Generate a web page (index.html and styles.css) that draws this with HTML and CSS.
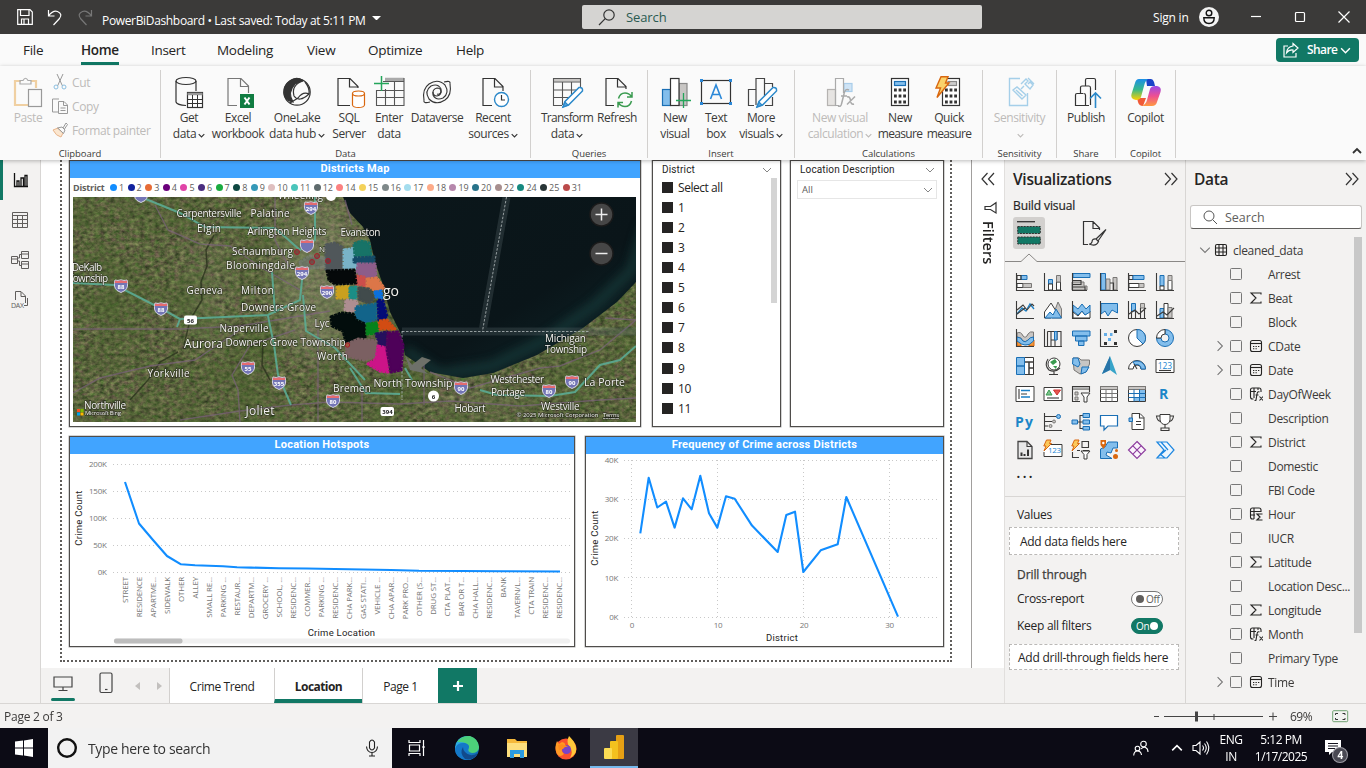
FILE: index.html
```html
<!DOCTYPE html>
<html lang="en">
<head>
<meta charset="utf-8">
<title>PowerBiDashboard</title>
<link rel="stylesheet" href="styles.css">
</head>
<body>
<svg class="defs" width="0" height="0">
  <defs>
    <symbol id="chev" viewBox="0 0 10 10"><path d="M1 3L5 7L9 3"/></symbol>
    <symbol id="sigma" viewBox="0 0 14 14"><path d="M12 3.500V2H2L7 7L2 12H12V10.500"/></symbol>
    <symbol id="cal" viewBox="0 0 14 14"><rect x="1.500" y="1.500" width="11" height="11" rx="2"/><path d="M1.500 4.500H12.500"/><path d="M4 7.500H10.500M4 9.800H8" stroke-dasharray="1.300 1.200"/></symbol>
    <symbol id="fx" viewBox="0 0 14 14"><path d="M4.500 12H3.500Q1.500 12 1.500 10V3Q1.500 1 3.500 1H10Q12 1 12 3V5M1.500 4.500H7M5 1V11M9 1V3"/><path d="M10.500 5Q8.500 4 8 7L7 13Q6.500 14.500 5 14M6.500 8H9.500M10.500 9.500L14 13.500M14 9.500L10.500 13.500"/></symbol>
    <symbol id="sumcol" viewBox="0 0 14 14"><path d="M5 12H3.500Q1.500 12 1.500 10V3Q1.500 1 3.500 1H10Q12 1 12 3V5M1.500 4.500H12M1.500 8H6M5 1V12"/><path d="M13.500 7H8L11 10L8 13H13.500" stroke-width="1.200"/></symbol>
    <symbol id="shield" viewBox="0 0 14 14"><path d="M1 1Q4 2 7 .8Q10 2 13 1Q15 8 11 11.500L7 13.500L3 11.500Q-1 8 1 1Z" fill="#7375b5" stroke="#e4e3ef" stroke-width=".9"/><path d="M1.300 1.500Q4 2.400 7 1.200Q10 2.400 12.700 1.500L13.300 4H.7Z" fill="#e56b70"/></symbol>
  </defs>
</svg>
<div class="app">
  <header class="titlebar">
    <div class="quick">
      <svg width="16" height="16" viewBox="0 0 16 16"><path d="M.7 .7H13L15.300 3V15.300H.7ZM3.500 1V6.500H12V1M4.500 15V10H11.500V15M7 10V15"/></svg>
      <svg width="16" height="18" viewBox="0 0 16 18"><path d="M1.500 2V8H7.500M1.500 8Q6 2 10.500 3.500Q16 6 12.500 10.500L6.500 17"/></svg>
      <svg class="off" width="16" height="18" viewBox="0 0 16 18"><path d="M14.500 2V8H8.500M14.500 8Q10 2 5.500 3.500Q0 6 3.500 10.500L9.500 17"/></svg>
    </div>
    <div class="doc">PowerBiDashboard • Last saved: Today at 5:11 PM</div><i class="doc-caret"></i>
    <div class="top-search"><svg width="18" height="18" viewBox="0 0 18 18"><circle cx="11" cy="7" r="5.200"/><path d="M7.200 10.700L1 17"/></svg><span>Search</span></div>
    <div class="sign">Sign in</div>
    <svg class="avatar" width="20" height="20" viewBox="0 0 20 20"><circle cx="10" cy="10" r="10" fill="#f3f3f3" stroke="none"/><circle cx="10" cy="6" r="2.800" fill="none" stroke="#111" stroke-width="1.400"/><path d="M4.800 10.800H15.200Q15.200 16.500 10 16.500Q4.800 16.500 4.800 10.800Z" fill="none" stroke="#111" stroke-width="1.400"/></svg>
    <div class="win"><svg width="12" height="12" viewBox="0 0 12 12"><path d="M1 5.500H11"/></svg><svg width="12" height="12" viewBox="0 0 12 12"><rect x="1.500" y="1.500" width="9" height="9" rx="1"/></svg><svg width="12" height="12" viewBox="0 0 12 12"><path d="M.5 .5L11.500 11.500M11.500 .5L.5 11.500"/></svg></div>
  </header>

  <nav class="menu">
    <span class="m1">File</span><span class="m2"><b>Home</b></span><span class="m3">Insert</span><span class="m4">Modeling</span><span class="m5">View</span><span class="m6">Optimize</span><span class="m7">Help</span>
    <div class="share"><svg width="16" height="16" viewBox="0 0 16 16"><path d="M5 4H1V15H13V11M10 1.500L15 6L10 10.500V8Q6 7.500 3.500 11Q4 4.800 10 4Z"/></svg><span>Share</span><svg class="c" width="11" height="11"><use href="#chev"/></svg></div>
  </nav>

  <section class="ribbon">
    <div class="group g-clip">
      <div class="tools">
        <div class="btn off b-paste"><svg width="32" height="32" viewBox="0 0 32 32"><path d="M9 5H3V29H16" stroke="#f0d0a2" stroke-width="2.200"/><path d="M19 5H24V12" stroke="#f0d0a2" stroke-width="2.200"/><path d="M8 8V4.500H11Q13.500 0 16 4.500H19V8Z" stroke="#aaa"/><rect x="16.500" y="13.500" width="13" height="17" fill="#fafafa" stroke="#999"/></svg><span>Paste</span></div>
        <div class="stack">
          <div><svg width="16" height="16" viewBox="0 0 16 16"><path d="M5 0L10.500 12M11 0L5.500 12" stroke="#999"/><circle cx="4" cy="13" r="2" stroke="#8cbfe0"/><circle cx="12" cy="13" r="2" stroke="#8cbfe0"/></svg>Cut</div>
          <div><svg width="16" height="16" viewBox="0 0 16 16"><path d="M6 14H.5V1H7M6.500 3.500H12L15.500 7V15.500H6.500ZM11.500 4V7.500H15M8.500 10H13.500M8.500 12.500H13.500" stroke="#999"/></svg>Copy</div>
          <div><svg width="16" height="16" viewBox="0 0 16 16"><path d="M1 8L6 6L11 11L9 15Q4 14 1 8Z" stroke="#e8b48a" fill="#fbe6cf"/><path d="M5.500 6L11.500 11.500L13 8L10 5ZM11 6L14 1L15.500 2.500L12.500 7" stroke="#999"/></svg>Format painter</div>
        </div>
      </div>
      <div class="glabel">Clipboard</div>
    </div>
    <div class="group g-data">
      <div class="tools">
        <div class="btn" style="width:56px"><svg width="32" height="32" viewBox="0 0 32 32"><ellipse cx="13" cy="5" rx="10" ry="3.500"/><path d="M3 5V26Q4 29 13 29.500M23 5V15"/><rect x="14.500" y="16.500" width="15" height="15" fill="#fff"/><path d="M14.500 18H29.500" stroke-width="2.500" stroke="#999"/><path d="M14.500 23.500H29.500M14.500 27.500H29.500M19.500 19V31M24.500 19V31" stroke-width="1"/></svg><span>Get</span><span>data<svg class="c"><use href="#chev"/></svg></span></div>
        <div class="btn" style="width:42px"><svg width="32" height="32" viewBox="0 0 32 32"><path d="M15 29.500H6V2.500H19L26.500 10V17M18.500 3V10.500H26" stroke="#777"/><rect x="18" y="18" width="14" height="14" fill="#107c41" stroke="none"/><path d="M22.500 21.500L27.500 28.500M27.500 21.500L22.500 28.500" stroke="#fff" stroke-width="2"/></svg><span>Excel</span><span>workbook</span></div>
        <div class="btn" style="width:76px"><svg width="32" height="32" viewBox="0 0 32 32"><circle cx="16" cy="16" r="13.200"/><path d="M9 5Q15 0 22 4.500L14 8Q6 16 12 26Q4 25 3 17Q3 9 9 5Z" fill="#333"/><path d="M22 5Q10 9 13 20Q18 27 28 18Q22 15 17 22L9 27M24 6Q29 12 28 18"/></svg><span>OneLake</span><span>data hub<svg class="c"><use href="#chev"/></svg></span></div>
        <div class="btn" style="width:28px"><svg width="32" height="32" viewBox="0 0 32 32"><path d="M17 29.500H5V2.500H17L25 10.500V12M16.500 3V11H25"/><path d="M19.500 17.500V29Q20 31.500 25.500 31.500T31.500 29V17.500" stroke="#d9670f" fill="#fff"/><ellipse cx="25.500" cy="17.500" rx="6" ry="2.500" stroke="#d9670f" fill="#fff"/></svg><span>SQL</span><span>Server</span></div>
        <div class="btn" style="width:52px"><svg width="32" height="32" viewBox="0 0 32 32"><path d="M12 3.500H31" stroke="#aaa" stroke-width="3.500"/><path d="M3.500 14V29.500H31V2M10 5.500H31M3.500 14.500H31M3.500 21.500H31M12.500 13V29.500M21.500 6V29.500" stroke="#555" stroke-width="1.100"/><path d="M8.500 0V15M1 7.500H16" stroke="#23a55a" stroke-width="1.500"/></svg><span>Enter</span><span>data</span></div>
        <div class="btn" style="width:44px"><svg width="32" height="32" viewBox="0 0 32 32"><path d="M3 24Q1 13 8 8Q17 2 24 9Q29 17 22 22Q15 25 12 19Q11 13 16 12Q20 12 20 16Q19 19 16 18" stroke-width="1.100"/><path d="M29 8Q31 19 24 24Q15 30 8 23Q3 15 10 10Q17 7 20 13Q21 19 16 20Q12 20 12 16" stroke-width="1.100"/><path d="M3 24Q2 28 9 26M29 8Q30 4 23 6" stroke-width="1.100"/></svg><span>Dataverse</span></div>
        <div class="btn" style="width:68px"><svg width="32" height="32" viewBox="0 0 32 32"><path d="M15 29.500H6V2.500H18L26 10.500V15M17.500 3V11H26"/><circle cx="24.500" cy="23.500" r="7" stroke="#2b88c9" stroke-width="1.400" fill="#fff"/><path d="M24.500 19V24H28"/></svg><span>Recent</span><span>sources<svg class="c"><use href="#chev"/></svg></span></div>
      </div>
      <div class="glabel">Data</div>
    </div>
    <div class="group g-query">
      <div class="tools">
        <div class="btn" style="width:54px"><svg width="32" height="32" viewBox="0 0 32 32"><path d="M2 4H30" stroke="#c8c6c4" stroke-width="3"/><path d="M11 29.500H2.500V2.500H29.500V12M2.500 6H29.500M2.500 14H25M2.500 21.500H18M11.500 6V29M20.500 6V19" stroke="#555" stroke-width="1.100"/><path d="M12 31L14 25.500L28 11.500Q32 11 31.500 15L17.500 29Z" stroke="#2b88c9" fill="#fff" stroke-width="1.500"/><path d="M12 31L14 26L17 29Z" fill="#5aa7e0" stroke="#2b88c9"/></svg><span class="tight">Transform</span><span>data<svg class="c"><use href="#chev"/></svg></span></div>
        <div class="btn" style="width:46px"><svg width="32" height="32" viewBox="0 0 32 32"><path d="M13 29.500H5V2.500H17L25 10.500V13M16.500 3V11H25"/><path d="M17.500 22.500Q19 17 24 17Q28 17 30.500 20.500M31 16V21H26M30.500 25Q29 30.500 24 30.500Q20 30.500 17.500 27M17 31.500V26.500H22" stroke="#3a9b50" stroke-width="1.500"/></svg><span>Refresh</span></div>
      </div>
      <div class="glabel">Queries</div>
    </div>
    <div class="group g-insert">
      <div class="tools">
        <div class="btn" style="width:54px"><svg width="32" height="32" viewBox="0 0 32 32"><rect x="20" y="7.500" width="8" height="22" fill="#c8c6c4" stroke="#888"/><rect x="3.500" y="13.500" width="8" height="16" fill="#83beec" stroke="#1a6fb5"/><rect x="11.500" y="2.500" width="8.500" height="27" fill="#fff"/><path d="M24.500 17V32M17 24.500H32" stroke="#23a55a" stroke-width="1.300"/></svg><span>New</span><span>visual</span></div>
        <div class="btn" style="width:28px"><svg width="32" height="32" viewBox="0 0 32 32"><rect x="1.500" y="4.500" width="29" height="23"/><path d="M10.500 23L16 9L21.500 23M12.500 18.500H19.500" stroke="#2b88d8" stroke-width="1.600"/><path d="M0 3H3V6H0ZM29 3H32V6H29ZM0 26H3V29H0ZM29 26H32V29H29Z" fill="#2b88d8" stroke="none"/></svg><span>Text</span><span>box</span></div>
        <div class="btn" style="width:62px"><svg width="32" height="32" viewBox="0 0 32 32"><path d="M9 29.500H3.500V13.500H11.500M11 29V2.500H19.500V20M20 7.500H27.500V11M20 29.500H27.500V21" stroke="#444"/><path d="M12 31L14 25.500L28 11.500Q32 11 31.500 15L17.500 29Z" stroke="#2b88c9" fill="#fff" stroke-width="1.500"/><path d="M12 31L14 26L17 29Z" fill="#5aa7e0" stroke="#2b88c9"/></svg><span>More</span><span>visuals<svg class="c"><use href="#chev"/></svg></span></div>
      </div>
      <div class="glabel">Insert</div>
    </div>
    <div class="group g-calc">
      <div class="tools">
        <div class="btn off" style="width:80px"><svg width="32" height="32" viewBox="0 0 32 32"><rect x="3.500" y="13.500" width="8" height="16" fill="#e6e4e2" stroke="#b5b3b1"/><rect x="20" y="7.500" width="8" height="8" fill="#cfe4f6" stroke="#a9cdea"/><path d="M15 29.500H11.500V2.500H19.500V17" stroke="#aaa"/><path d="M25 14Q21 12 20 18L17.500 28Q17 31 14 30M17 20H23M23 21Q26 20 26.500 24.500Q27 29 30 28M31 20.500L23 28.500" stroke="#aaa" stroke-width="1.500"/></svg><span>New visual</span><span>calculation<svg class="c"><use href="#chev"/></svg></span></div>
        <div class="btn" style="width:40px"><svg width="32" height="32" viewBox="0 0 32 32"><rect x="7.500" y="2.500" width="17" height="27" fill="#fff"/><rect x="10.500" y="5.500" width="11" height="4" fill="#83beec" stroke="#1a6fb5"/><path d="M10 14H22M10 20H22M10 26H22" stroke-width="2.800" stroke-dasharray="2.800 1.800"/></svg><span>New</span><span class="tight">measure</span></div>
        <div class="btn" style="width:58px"><svg width="32" height="32" viewBox="0 0 32 32"><rect x="9.500" y="2.500" width="17" height="27" fill="#fff"/><rect x="15" y="5.500" width="8.500" height="4" fill="#ccc" stroke="#888"/><path d="M12 14H24M12 20H24M12 26H24" stroke-width="2.800" stroke-dasharray="2.800 1.800"/><path d="M8 .8H15L12.500 7H16L4 21.500L7.500 12H3Z" fill="#fbd36b" stroke="#d9670f" stroke-width="1.400"/></svg><span>Quick</span><span class="tight">measure</span></div>
      </div>
      <div class="glabel">Calculations</div>
    </div>
    <div class="group g-sens">
      <div class="tools"><div class="btn off" style="width:73px"><svg width="32" height="32" viewBox="0 0 32 32"><path d="M16 2.500H5.500V29.500H23.500V17" stroke="#a5cfe9" stroke-width="1.400"/><path d="M9 14L13 11L22 19L18 23ZM12 14L18.500 20M17 8L22 3L24 5L21 8L26 13L29 9L26 6L24 8M20 10L17 13M24 2L30 8" stroke="#a5cfe9" stroke-width="1.400"/></svg><span>Sensitivity</span><span><svg class="c"><use href="#chev"/></svg></span></div></div>
      <div class="glabel">Sensitivity</div>
    </div>
    <div class="group g-share">
      <div class="tools"><div class="btn" style="width:58px"><svg width="32" height="32" viewBox="0 0 32 32"><path d="M19 29.500H5.500V19Q5.500 17.500 7 17.500H13M10.500 17V11.500Q10.500 10 12 10H19M15.500 10V4Q15.500 2.500 17 2.500H24Q25.500 2.500 25.500 4V14M13.500 17.500Q15.500 17.500 15.500 19V29M19 10Q20.500 10 20.500 12V29"/><path d="M25.500 32V17M20 22.500L25.500 17L31 22.500" stroke="#2b88c9" stroke-width="1.600"/></svg><span>Publish</span></div></div>
      <div class="glabel">Share</div>
    </div>
    <div class="group g-copilot">
      <div class="tools"><div class="btn" style="width:59px"><svg width="32" height="32" viewBox="0 0 32 32"><defs><linearGradient id="cpa" x1="0" y1="0" x2="0" y2="1"><stop offset="0" stop-color="#1c8fe8"/><stop offset=".5" stop-color="#37b98a"/><stop offset="1" stop-color="#ffd000"/></linearGradient><linearGradient id="cpb" x1="0" y1="0" x2="0" y2="1"><stop offset="0" stop-color="#9a4be8"/><stop offset=".5" stop-color="#ee4f92"/><stop offset="1" stop-color="#ff9a40"/></linearGradient></defs><g stroke="none"><path d="M16 3H21Q23 3 24 6L25 10H17Z" fill="#1b44c8"/><path d="M7 22H16L13 30Q9 30 8 26Z" fill="#f05a38"/><path d="M9 3H18Q15 5 14 10L11 21Q10 24 6 24Q0 23 1.500 18L5 7Q6 3 9 3Z" fill="url(#cpa)"/><path d="M25 10H27Q32 11 30.500 16L27 26Q26 30 22 30H12Q16 28 17 24L20 13Q21 10 25 10Z" fill="url(#cpb)"/></g></svg><span>Copilot</span></div></div>
      <div class="glabel">Copilot</div>
    </div>
    <svg class="collapse" width="10" height="10"><use href="#chev"/></svg>
  </section>

  <main class="work">
    <aside class="rail">
      <div class="rail-i on"><svg width="16" height="16" viewBox="0 0 16 16"><path d="M1.500 1V14.500H15M4 14V9H6V14M8 14V6H10.500V14M12 14V3.500H14V14" stroke="#111" stroke-width="1.300"/></svg></div>
      <div class="rail-i"><svg width="16" height="16" viewBox="0 0 16 16"><path d="M.5 .5H15.500V15.500H.5ZM.5 3.500H15.500M.5 7.500H15.500M.5 11.500H15.500M5.500 3.500V15M10.500 3.500V15"/></svg></div>
      <div class="rail-i"><svg width="20" height="20" viewBox="0 0 20 20"><path d="M1.500 6.500H7.500V13.500H1.500ZM1.500 9H7.500M11.500 1.500H18.500V8.500H11.500ZM11.500 4H18.500M11.500 11.500H18.500V18.500H11.500ZM11.500 14H18.500M7.500 8H9.500V4.500H11.500M7.500 11H9.500V15.500H11.500"/></svg></div>
      <div class="rail-i"><svg width="20" height="20" viewBox="0 0 20 20"><path d="M5.500 10V1.500H11L15.500 6V13M11 2V6.500H15.500M17.500 8V15.500H14"/><text x="1" y="18" textLength="13" font-size="7">DAX</text></svg></div>
    </aside>
    <div class="center">
      <div class="upper">
        <div class="canvas">
          <div class="page">
            <div class="row r1">
              <div class="card c-map">
                <h3>Districts Map</h3>
                <div class="legend"><b>District</b>
                  <span><i style="background:#118dff"></i>1</span><span><i style="background:#12239e"></i>2</span><span><i style="background:#e66c37"></i>3</span><span><i style="background:#6b007b"></i>4</span><span><i style="background:#e044a7"></i>5</span><span><i style="background:#4b2e80"></i>6</span><span><i style="background:#1aab40"></i>7</span><span><i style="background:#0f4842"></i>8</span><span><i style="background:#3599b8"></i>9</span><span class="w"><i style="background:#dfbfbf"></i>10</span><span class="w"><i style="background:#4ac5bb"></i>11</span><span class="w"><i style="background:#5f6b6d"></i>12</span><span class="w"><i style="background:#fb8281"></i>14</span><span class="w"><i style="background:#f4d25a"></i>15</span><span class="w"><i style="background:#7f898a"></i>16</span><span class="w"><i style="background:#a4ddee"></i>17</span><span class="w"><i style="background:#fdab89"></i>18</span><span class="w"><i style="background:#b687ac"></i>19</span><span class="w"><i style="background:#28738a"></i>20</span><span class="w"><i style="background:#a78f8f"></i>22</span><span class="w"><i style="background:#168980"></i>24</span><span class="w"><i style="background:#293537"></i>25</span><span class="w"><i style="background:#bb4a4a"></i>31</span>
                </div>
                <svg class="map" width="563" height="225" viewBox="73 197 563 225">
                  <defs>
                    <filter id="land" x="0" y="0" width="1" height="1" color-interpolation-filters="sRGB"><feTurbulence type="fractalNoise" baseFrequency=".2 .26" numOctaves="4" seed="11"/><feColorMatrix values=".42 .18 0 0 .06  .24 .36 0 0 .09  .3 .1 0 0 .045  0 0 0 0 1"/></filter>
                    <filter id="patch" x="0" y="0" width="1" height="1" color-interpolation-filters="sRGB"><feTurbulence type="fractalNoise" baseFrequency=".022" numOctaves="4" seed="3"/><feColorMatrix values="0 0 0 0 .27  0 0 0 0 .38  0 0 0 0 .16  1.600 0 0 0 -.55"/></filter>
                    <filter id="soft" x="-1" y="-1" width="3" height="3"><feGaussianBlur stdDeviation="14"/></filter>
                    <filter id="edge"><feGaussianBlur stdDeviation="5"/></filter>
                    <linearGradient id="lake" x1="0" y1="0" x2="1" y2="1"><stop offset="0" stop-color="#0b171b"/><stop offset=".6" stop-color="#0a1519"/><stop offset="1" stop-color="#0f282c"/></linearGradient>
                    <path id="shore" d="M343 197L350 213L363 227L370 240L375 262L382 282L390 312L400 332L405 355L430 372L463 378L493 373L537 355L583 328L617 302L636 282V197Z"/>
                    <clipPath id="lakeclip"><use href="#shore"/></clipPath>
                  </defs>
                  <rect x="73" y="197" width="563" height="225" filter="url(#land)"/>
                  <rect x="73" y="197" width="563" height="225" filter="url(#patch)" opacity=".65"/>
                  <g filter="url(#soft)"><ellipse cx="318" cy="280" rx="45" ry="80" fill="#a5a18c" opacity=".3"/><ellipse cx="480" cy="398" rx="60" ry="10" fill="#958f78" opacity=".25"/><ellipse cx="210" cy="290" rx="25" ry="60" fill="#a5a18c" opacity=".12"/></g>
                  <path d="M214 235L206 250L207 266L201 282L202 300L190 320L184 345M178 352L160 362L148 380L130 400M263 345L262 365L270 380" stroke="#2a331d" stroke-width="1.500" fill="none" opacity=".8"/>
                  <use href="#shore" fill="url(#lake)"/>
                  <g clip-path="url(#lakeclip)"><path d="M645 225L632 270L595 305L545 340L492 366L440 374L405 350" stroke="#1c4442" stroke-width="11" fill="none" opacity=".55" filter="url(#edge)"/></g>
                  <g fill="none" stroke="#7b637a" stroke-width="1.400" opacity=".7"><path d="M155 205L168 230L200 244L230 246L262 268L300 290M73 329L180 329L240 326L300 316L330 311M73 393L100 378L150 366L195 360L240 330M275 197V240L288 265L300 273M240 422L238 390L232 375L250 345L295 330M180 420L240 411L290 405L330 402L400 404L450 401L520 406L600 400L636 398M318 330V422M345 200L352 225M430 372L470 388L540 368L560 366L600 350L636 320L605 318M362 390V422M424 365V405"/></g>
                  <g fill="none" stroke="#5bab93" stroke-width="2" opacity=".9"><path d="M141 197L180 213L205 227L275 228L300 250L315 240V197M73 283L115 285L160 308L180 319L268 315L300 300L303 270M180 319L177 327M275 313L272 272M268 316L274 345L278 375L291 405M303 295L306 331L335 348L365 380M350 368L366 393L400 394M405 368L412 380M480 390L497 395L550 396L575 392L600 365L620 360L636 346"/></g>
                  <path d="M506.500 197L482.500 331M402 331.500H636" stroke="#58666a" stroke-width="8" opacity=".3" fill="none"/>
                  <path d="M506.500 197L482.500 331M402 331.500H590M402 331V400" stroke="#b3babc" stroke-width="1" stroke-dasharray="2.500 1.500" fill="none" opacity=".8"/>
                  <path d="M405 355L412 365L422 357L431 360L421 368L428 374L410 370Z" fill="#6e7069"/>
                  <g stroke-linejoin="round" stroke-width="3" stroke-dasharray="3 .6">
                    <path d="M326 245L334 243L342 247V271H326Z" fill="#50575a" stroke="#50575a"/><path d="M300 262L310 256L324 258V267L302 269Z" fill="#6c7270" stroke="#7c8280" opacity=".6"/>
                    <path d="M344 250L356 248L358 268L344 269Z" fill="#79b3c8" stroke="#79b3c8"/>
                    <path d="M354 244L361 241L369 243L371 256H355Z" fill="#177367" stroke="#177367"/><path d="M354 258L374 257L374 263L354 262Z" fill="#154b68" stroke="#154b68"/>
                    <path d="M358 264L375 264L376 277L364 278L357 272Z" fill="#8d5d8a" stroke="#8d5d8a"/>
                    <path d="M356 276L364 277L366 286L355 284Z" fill="#cc4e4b" stroke="#cc4e4b"/><path d="M367 279L377 278L384 288L377 291L367 287Z" fill="#dc7648" stroke="#dc7648"/>
                    <path d="M337 287L348 286V298H337Z" fill="#c9a01f" stroke="#c9a01f"/><path d="M350 288L356 287V299L350 298Z" fill="#1b8e86" stroke="#1b8e86"/>
                    <path d="M359 288L369 289L374 298L369 303L359 299Z" fill="#414b4c" stroke="#414b4c"/><path d="M375 292L381 291L382 298L376 297Z" fill="#0b70df" stroke="#0b70df"/>
                    <path d="M346 300L356 301L359 308L352 312L345 310Z" fill="#ae8e91" stroke="#ae8e91"/><path d="M356 307L376 304V319L366 323L356 318Z" fill="#12648a" stroke="#12648a"/>
                    <path d="M378 300L383 301L387 317L379 320Z" fill="#040c77" stroke="#040c77"/>
                    <path d="M331 317L341 313L353 314L356 320L365 324V342L346 342L343 331L332 326Z" fill="#020d0c" stroke="#020d0c"/>
                    <path d="M367 324L378 323L377 333L367 334Z" fill="#05831c" stroke="#05831c"/><path d="M379 321L387 320L395 329L380 329Z" fill="#d24c13" stroke="#d24c13"/>
                    <path d="M376 334L387 332L386 346L379 345Z" fill="#25105d" stroke="#25105d"/>
                    <path d="M347 344L358 339L376 341V357L364 360L346 356Z" fill="#7b6062" stroke="#7b6062"/>
                    <path d="M378 346L387 348L388 372L380 371L368 364L376 359Z" fill="#cc1488" stroke="#cc1488"/>
                    <path d="M388 333L398 332L403 345L401 370L391 372L387 350Z" fill="#4e0159" stroke="#4e0159"/>
                    <path d="M327 271L354 270L356 283L335 284L329 280Z" fill="#05090a" stroke="#05090a"/>
                  </g>
                  <g stroke="#a51f2b" fill="#7b2228" fill-opacity=".45"><circle cx="297" cy="252" r="2.500"/><circle cx="305" cy="247" r="2.500"/><circle cx="308.500" cy="249.500" r="2.500"/><circle cx="317" cy="256" r="2.500"/><circle cx="312" cy="262" r="2.500"/><circle cx="328" cy="261" r="2.500"/><circle cx="347.500" cy="345" r="2.200" fill="#d24c13"/></g>
                  <circle cx="331" cy="196" r="5" fill="#fff"/>
                  <g class="shields">
                    <use href="#shield" x="134" y="189" width="14" height="14"/><use href="#shield" x="303.500" y="201" width="15" height="14"/><use href="#shield" x="300" y="239" width="14" height="14"/><use href="#shield" x="294.500" y="266" width="15" height="14"/><use href="#shield" x="114" y="279" width="14" height="14"/><use href="#shield" x="154" y="302" width="14" height="14"/><use href="#shield" x="319.500" y="285" width="15" height="14"/><use href="#shield" x="241" y="361" width="14" height="14"/><use href="#shield" x="271.500" y="376" width="15" height="14"/><use href="#shield" x="326" y="394" width="14" height="14"/><use href="#shield" x="454" y="381" width="14" height="14"/><use href="#shield" x="542" y="384" width="14" height="14"/><use href="#shield" x="565" y="375" width="14" height="14"/>
                    <text x="311" y="211">294</text><text x="302" y="276">294</text><text x="121" y="289">88</text><text x="161" y="312">88</text><text x="327" y="295">290</text><text x="248" y="371">55</text><text x="279" y="386">355</text><text x="333" y="404">80</text><text x="461" y="391">90</text><text x="549" y="394">80</text><text x="572" y="385">90</text>
                    <rect x="184" y="315.500" width="13" height="9" rx="2" fill="#fff"/><rect x="380.500" y="407" width="13.500" height="9" rx="2" fill="#fff"/><circle cx="433.500" cy="396" r="5.500" fill="#fff"/>
                    <g class="dark"><text x="190.500" y="322.500">56</text><text x="387.500" y="414">394</text><text x="433.500" y="398.500">6</text></g>
                  </g>
                  <g class="places">
                    <text x="278" y="198.500" textLength="45">Wheeling</text><text x="176.500" y="216.500" textLength="65">Carpentersville</text><text x="250.500" y="217" textLength="39">Palatine</text><text x="197" y="231.500" textLength="24">Elgin</text><text x="247.500" y="234.500" textLength="79">Arlington Heights</text><text x="340.500" y="236" textLength="40">Evanston</text><text x="232" y="255" textLength="61">Schaumburg</text><text x="319" y="252" font-size="8">N</text><text x="226" y="269" textLength="69">Bloomingdale</text><text x="72" y="270.500" textLength="30">DeKalb</text><text x="68" y="282" textLength="40">Township</text><text x="186.500" y="293.500" textLength="36">Geneva</text><text x="241" y="293.500" textLength="33">Milton</text><text x="241" y="311" textLength="75">Downers Grove</text><text class="big" x="383" y="296" textLength="16">go</text><text x="219.500" y="332" textLength="49">Naperville</text><text x="314.500" y="326.500" textLength="15">Lyc</text><text class="mid" x="184" y="348" textLength="39">Aurora</text><text x="225.500" y="346" textLength="120">Downers Grove Township</text><text x="317" y="360" textLength="31">Worth</text><text x="147.500" y="376.500" textLength="42">Yorkville</text><text x="333" y="392" textLength="38">Bremen</text><text x="84" y="408.500" textLength="42">Northville</text><text class="mid" x="245.500" y="415" textLength="29">Joliet</text><text x="454.500" y="412" textLength="31">Hobart</text><text x="373.500" y="386.500" textLength="79" font-size="10.500">North Township</text><text x="490.500" y="383" textLength="53.500">Westchester</text><text x="491" y="395.500" textLength="34">Portage</text><text x="541" y="410" textLength="38.500">Westville</text><text x="584" y="386" textLength="41" font-size="10.500">La Porte</text><text x="545" y="341.500" textLength="41">Michigan</text><text x="545" y="352.500" textLength="42">Township</text>
                    <text x="85" y="414.500" textLength="36" font-size="6">Microsoft Bing</text><text x="516.500" y="417" textLength="82" font-size="6">© 2025 Microsoft Corporation</text><text x="603" y="417" textLength="16" font-size="6" text-decoration="underline">Terms</text>
                  </g>
                  <path d="M77 409H80V412H77Z" fill="#f25022"/><path d="M80.500 409H83.500V412H80.500Z" fill="#7fba00"/><path d="M77 412.500H80V415.500H77Z" fill="#00a4ef"/><path d="M80.500 412.500H83.500V415.500H80.500Z" fill="#ffb900"/>
                  <g fill="#464646" stroke="#1b1b1b" stroke-width="1.500"><circle cx="601.500" cy="214.500" r="11.500"/><circle cx="601.500" cy="253.500" r="11.500"/></g><path d="M595.500 214.500H607.500M601.500 208.500V220.500M595.500 253.500H607.500" stroke="#eee" stroke-width="1.500"/>
                </svg>
              </div>
              <div class="card c-slicer">
                <div class="s-head"><span>District</span><svg class="c" width="10" height="10"><use href="#chev"/></svg></div>
                <div class="s-body"><ul><li>Select all</li><li>1</li><li>2</li><li>3</li><li>4</li><li>5</li><li>6</li><li>7</li><li>8</li><li>9</li><li>10</li><li>11</li></ul><div class="s-scroll"></div></div>
              </div>
              <div class="card c-loc">
                <div class="s-head"><span>Location Description</span><svg class="c" width="10" height="10"><use href="#chev"/></svg></div>
                <div class="s-drop"><span>All</span><svg class="c" width="10" height="10"><use href="#chev"/></svg></div>
              </div>
            </div>
            <div class="row r2">
              <div class="card c-hot">
                <h3>Location Hotspots</h3>
                <svg class="chart" width="504" height="192" viewBox="70 454 504 192">
                  <path class="grid" d="M113 464.500H570M113 491.500H570M113 518.500H570M113 545.500H570M113 572.500H570"/>
                  <g class="tick" text-anchor="end"><text x="106.500" y="467">200K</text><text x="106.500" y="494">150K</text><text x="106.500" y="521">100K</text><text x="106.500" y="548">50K</text><text x="106.500" y="575">0K</text></g>
                  <text class="axis" text-anchor="middle" transform="translate(82 518) rotate(-90)">Crime Count</text>
                  <text class="axis" text-anchor="middle" x="341.500" y="636">Crime Location</text>
                  <polyline class="line" points="125,482 139,523.500 153,540 167,556 181,564.300 195,565.300 209,565.800 223,566.300 237,567.300 251,567.600 279,568.200 307,568.500 335,569 363,569.500 391,570 419,570.800 461,571 503,571.300 560,571.500"/>
                  <g class="cat" text-anchor="end">
                    <text transform="translate(128 577) rotate(-90)">STREET</text><text transform="translate(142 577) rotate(-90)">RESIDENCE</text><text transform="translate(156 577) rotate(-90)">APARTME...</text><text transform="translate(170 577) rotate(-90)">SIDEWALK</text><text transform="translate(184 577) rotate(-90)">OTHER</text><text transform="translate(198 577) rotate(-90)">ALLEY</text><text transform="translate(212 577) rotate(-90)">SMALL RE...</text><text transform="translate(226 577) rotate(-90)">PARKING ...</text><text transform="translate(240 577) rotate(-90)">RESTAUR...</text><text transform="translate(254 577) rotate(-90)">DEPARTM...</text><text transform="translate(268 577) rotate(-90)">GROCERY ...</text><text transform="translate(282 577) rotate(-90)">SCHOOL, ...</text><text transform="translate(296 577) rotate(-90)">RESIDENC...</text><text transform="translate(310 577) rotate(-90)">COMMER...</text><text transform="translate(324 577) rotate(-90)">PARKING ...</text><text transform="translate(338 577) rotate(-90)">RESIDENC...</text><text transform="translate(352 577) rotate(-90)">CHA PARK...</text><text transform="translate(366 577) rotate(-90)">GAS STATI...</text><text transform="translate(380 577) rotate(-90)">VEHICLE ...</text><text transform="translate(394 577) rotate(-90)">CHA APAR...</text><text transform="translate(408 577) rotate(-90)">PARK PRO...</text><text transform="translate(422 577) rotate(-90)">OTHER (S...</text><text transform="translate(436 577) rotate(-90)">DRUG ST...</text><text transform="translate(450 577) rotate(-90)">CTA PLAT...</text><text transform="translate(464 577) rotate(-90)">BAR OR T...</text><text transform="translate(478 577) rotate(-90)">CHA HALL...</text><text transform="translate(492 577) rotate(-90)">RESIDENC...</text><text transform="translate(506 577) rotate(-90)">BANK</text><text transform="translate(520 577) rotate(-90)">TAVERN/L...</text><text transform="translate(534 577) rotate(-90)">CTA TRAIN</text><text transform="translate(548 577) rotate(-90)">RESIDENC...</text><text transform="translate(562 577) rotate(-90)">RESIDENC...</text>
                  </g>
                  <rect x="114" y="638.500" width="456" height="5" rx="2.500" fill="#f0f0f0"/><rect x="114" y="638.500" width="68.500" height="5" rx="2" fill="#bdbdbd"/>
                </svg>
              </div>
              <div class="card c-freq">
                <h3>Frequency of Crime across Districts</h3>
                <svg class="chart" width="357" height="192" viewBox="586 454 357 192">
                  <path class="grid" d="M624 460.500H939M624 499.500H939M624 538.500H939M624 577.500H939M624 617.500H939M631.500 460V617M717.500 460V617M803.500 460V617M889.500 460V617"/>
                  <g class="tick" text-anchor="end"><text x="618" y="463">40K</text><text x="618" y="502">30K</text><text x="618" y="541">20K</text><text x="618" y="580.500">10K</text><text x="618" y="620">0K</text></g>
                  <g class="tick" text-anchor="middle"><text x="632" y="628">0</text><text x="718" y="628">10</text><text x="804" y="628">20</text><text x="889.500" y="628">30</text></g>
                  <text class="axis" text-anchor="middle" transform="translate(598 538) rotate(-90)">Crime Count</text>
                  <text class="axis" text-anchor="middle" x="782" y="641">District</text>
                  <polyline class="line" points="640.300,533.300 648.700,477.700 657.300,507.500 666,501.700 674.600,527.600 683,498.300 691.700,509.300 700.300,475.700 709,513.300 717.300,527.600 726,496.300 734.700,498.700 752,525.600 777.700,552 786.300,515 795,511.700 803.300,572 820.700,550.300 837.700,544.300 846.300,497 898,616.700"/>
                </svg>
              </div>
            </div>
          </div>
        </div>
        <div class="filters"><svg width="14" height="14" viewBox="0 0 14 14"><path d="M6.500 1L1 7L6.500 13M13 1L7.500 7L13 13"/></svg><svg class="funnel" width="13" height="12" viewBox="0 0 13 12"><path d="M12 .7V11L6.500 7.500H1V4.500H6.500Z"/></svg><span>Filters</span></div>
      </div>
      <div class="tabs">
        <div class="t-dev on"><svg width="20" height="16" viewBox="0 0 20 16"><path d="M1 1H19V11H1ZM10 11V14.500M5.500 14.500H14.500"/></svg></div>
        <div class="t-dev"><svg width="14" height="22" viewBox="0 0 14 22"><rect x="1" y="1" width="12" height="19.500" rx="1.500"/><path d="M6 17.500H8.500"/></svg></div>
        <i class="arr l"></i><i class="arr r"></i>
        <div class="tab t1">Crime Trend</div><div class="tab t2">Location</div><div class="tab t3">Page 1</div><div class="add"><svg width="12" height="12" viewBox="0 0 12 12"><path d="M6 1V11M1 6H11"/></svg></div>
      </div>
    </div>
    <section class="viz">
      <div class="p-head"><span>Visualizations</span><svg width="14" height="14" viewBox="0 0 14 14"><path d="M1 1L6.500 7L1 13M7.500 1L13 7L7.500 13"/></svg></div>
      <div class="build">Build visual</div>
      <div class="modes">
        <div class="mode on"><svg width="24" height="24" viewBox="0 0 24 24"><path d="M0 .7H18" stroke="#333" stroke-width="1.300"/><rect x=".7" y="5.500" width="22.600" height="7" fill="#117865" stroke="#333" stroke-dasharray="2 1"/><rect x=".7" y="16" width="22.600" height="7" fill="#117865" stroke="#333" stroke-dasharray="2 1"/></svg></div>
        <div class="mode"><svg width="26" height="26" viewBox="0 0 26 26"><path d="M7 24.500H2.500V1.500H12L18.500 8V10M12 2V8.500H18M25 9.500L15 19M25 9.500L17 21M15 19Q11 18.500 11 22Q10 24.500 8 24Q15 27 17.500 21.500Z"/></svg></div>
      </div>
      <svg class="notch" width="180" height="10" viewBox="0 0 180 10"><path d="M0 8.500H16L24 1L32 8.500H180"/></svg>
      <div class="icons">
        <svg><path class="k" d="M1.500 1V18.500H19"/><path class="b" d="M6 3.500H12V7.500H6Z"/><path class="k" d="M2 3.500H6V7.500H2Z"/><path class="w" d="M2 11.500H8V15.500H2Z"/><path class="g" d="M8 11.500H16.500V15.500H8Z"/></svg>
        <svg><path class="k" d="M1.500 1V18.500H19"/><path class="b" d="M5.500 7.500H9.500V12H5.500Z"/><path class="w" d="M5.500 12H9.500V18H5.500ZM13.500 10H17.500V18H13.500Z"/><path class="g" d="M13.500 3.500H17.500V10H13.500Z"/></svg>
        <svg><path class="g" d="M1 10H13V14H16V18H1Z"/><path class="b" d="M2 1.500H19V5.500H2Z"/><path class="k" d="M1.500 1V18.500H16M2 8.500H10V12.500H2M2 15H14V18"/></svg>
        <svg><path class="b" d="M2 1.500H6.500V18H2Z"/><path class="g" d="M7 7H11V18H7ZM14 5.500H18V18H14Z"/><path class="k" d="M1.500 1V18.500H19M11 11H14.500V18"/></svg>
        <svg><path class="k" d="M1.500 1V18.500H19M2 3.500H6V7.500H2Z"/><path class="b" d="M6 3.500H17V7.500H6Z"/><path class="w" d="M2 11.500H12V15.500H2Z"/><path class="g" d="M12 11.500H17V15.500H12Z"/></svg>
        <svg><path class="k" d="M1.500 1V18.500H19"/><path class="b" d="M5 3.500H9V14H5Z"/><path class="w" d="M5 14H9V18H5ZM13 8.500H17V18H13Z"/><path class="g" d="M13 3.500H17V8.500H13Z"/></svg>

        <svg><path class="k" d="M1.500 1V18.500H19"/><path class="bl" d="M2 14L7 8L11 11L15 4L19 9"/><path class="k" d="M2 10L8 5L12 10L17 4L19 6M2 14L10 8"/></svg>
        <svg><path class="g" d="M9 18L15 2L18.500 9V18Z"/><path class="w" d="M1.500 12L8 3L13 11L8 18H1.500Z"/><path class="b" d="M2 18L7 12L10 15L13 9L18.500 18Z"/></svg>
        <svg><path class="w" d="M2 12L7 16L11 11L14 15L19 11V18H2Z"/><path class="b" d="M2 5L7 9L11 4L15 9L19 5V12L14 15L11 11L7 15L2 11Z"/><path class="k" d="M1.500 1V18.500H19"/></svg>
        <svg><path class="b" d="M2 3.500H18.500V13L13 10L9 16L6 11L2 14Z"/><path class="k" d="M1.500 1V18.500H19"/></svg>
        <svg><path class="b" d="M4.500 3.500H8.500V11H4.500Z"/><path class="g" d="M13.500 3.500H17.500V8H13.500Z"/><path class="k" d="M1.500 1V18.500H19M4.500 11V18M8.500 11V18M13.500 8V18M17.500 8V18M2 14L8 10L12 14L19 8"/></svg>
        <svg><path class="b" d="M5 8.500H9V18H5Z"/><path class="w" d="M9 3.500H13V18H9Z"/><path class="g" d="M13 7.500H17V18H13Z"/><path class="k" d="M1.500 1V18.500H19M2 16L8 12L12 15L19 8"/></svg>

        <svg><path class="g" d="M2 5Q6 3 8 8Q11 11 13 6Q15 3 18.500 4V9Q14 10 12 13Q8 15 6 10L2 9Z"/><path class="o" d="M2 12H6V18H2ZM14 12H19V18H14Z"/><path class="b" d="M2 9Q6 9 8 13Q10 15 13 12Q15 9 18.500 9V13Q14 18 10 17Q7 17 2 13Z"/><path class="k" d="M1.500 1V18.500H19"/></svg>
        <svg><path class="k" d="M1.500 1V18.500H19M4.500 3.500H8V18M4.500 3.500V18M8 3.500H12V10M8 12H12V18M14 3.500H18V18M14 3.500V12"/><path class="b" d="M11.500 3.500H14V12H11.500Z"/></svg>
        <svg><path class="b" d="M1.500 3H19V8H1.500ZM4.500 8H16V13H4.500ZM7.500 13H13V17.500H7.500Z"/></svg>
        <svg><path class="k" d="M1.500 1V18.500H19"/><path d="M15 2H18V5H15ZM5 14H8V17H5ZM15 14H18V17H15Z" fill="#333"/><path d="M5 5H8V8H5ZM9 10H12V13H9ZM11 5H13.500V8H11Z" fill="#64aee8"/></svg>
        <svg><circle class="w" cx="10" cy="10" r="8.500"/><path class="b" d="M10 1.500A8.500 8.500 0 0 1 16 16L10 10Z"/></svg>
        <svg><path class="b" d="M10 1.500A8.500 8.500 0 1 1 1.500 10H6A4 4 0 1 0 10 6Z"/><path class="w" d="M10 1.500A8.500 8.500 0 0 0 1.500 10H6A4 4 0 0 1 10 6Z"/></svg>

        <svg><path class="w" d="M9.500 1.500H18.500V6H9.500ZM9.500 6H14V18.500H9.500ZM14 6H18.500V12H14ZM14 12H18.500V18.500H14Z"/><path class="b" d="M1.500 1.500H9.500V10H1.500ZM1.500 10H9.500V18.500H1.500Z"/></svg>
        <svg><circle class="w" cx="11" cy="8" r="6"/><path d="M7 6L12 3L14 6L10 9ZM10 10H14L13 13Z" fill="#3a9b50"/><path class="k" d="M5 3Q1 9 6 14Q12 17 17 12M11 15V18M6 18.500H15"/></svg>
        <svg><path class="g" d="M2 2H8L10 4H18.500V8L15 16L9 18L3 14Z"/><path class="b" d="M2 2H7L9 8L7 11L1.500 8ZM11 11H18L15 16L10 18Z"/></svg>
        <svg><path d="M11 0L18 19L11 14L3 18Z" fill="#38a4c9"/><path d="M11 0V14L3 18Z" fill="#2874a8"/></svg>
        <svg><path class="w" d="M1.500 13A8.500 8.500 0 0 1 18.500 13H14A4 4 0 0 0 6 13Z"/><path class="b" d="M6 6A8.500 8.500 0 0 1 18.500 13H14A4 4 0 0 0 8 9Z"/><path class="k" d="M10 13L7 8"/></svg>
        <svg><path class="w" d="M1 3.500H19V16.500H1Z"/><text x="2.700" y="12.500" textLength="14.500" font-size="8.500" fill="#1b86d3">123</text><path class="k" d="M4 14.500H16" stroke-width=".8"/></svg>

        <svg><path class="w" d="M1 2.500H19V17.500H1Z"/><path class="bl" d="M6 6.500H15M6 13H15" stroke-width="2"/><path class="k" d="M4 5V15M6 10H12" stroke-width="1"/></svg>
        <svg><path class="w" d="M1 3.500H19V16.500H1Z"/><path d="M3 11L6 6L9 11Z" fill="#7cc38c" stroke="#3a9b50"/><path d="M10.500 6H17.500L14 11Z" fill="#e8564f" stroke="#c33"/><path class="k" d="M4 14H16" stroke-width=".8"/></svg>
        <svg><path class="k" d="M9 17.500H1.500V2.500H18.500V8M1.500 5H18.500"/><path d="M2 3H18V4.500H2Z" fill="#bbb"/><path class="g" d="M4 8H7V11H4ZM4 13H7V16H4Z"/><path class="w" d="M10 9H19L16 13V18H13V13Z"/></svg>
        <svg><path class="w" d="M1.500 2.500H18.500V17.500H1.500Z"/><path class="g" d="M1.500 2.500H18.500V5.500H1.500Z"/><path d="M1.500 9.500H18.500M1.500 13.500H18.500M7 5.500V17.500M13 5.500V17.500" stroke="#777" fill="none"/></svg>
        <svg><path class="w" d="M1.500 2.500H18.500V17.500H1.500Z"/><path class="g" d="M1.500 2.500H18.500V5.500H1.500Z"/><path d="M12.500 6H18V17H7V13.500H12.500Z" fill="#83beec"/><path d="M1.500 9.500H18.500M1.500 13.500H18.500M7 5.500V17.500M12.500 5.500V17.500" stroke="#1a6fb5" fill="none"/></svg>
        <svg><text x="4" y="15" font-size="14" font-weight="700" fill="#1b86c8">R</text></svg>

        <svg><text x="0" y="14.500" textLength="18" font-size="14" font-weight="700" fill="#1b86c8">Py</text></svg>
        <svg><path class="k" d="M1.500 1V18.500H19M2 4.500H13M2 9.500H9M2 14H5" stroke-width="1"/><circle class="b" cx="15.500" cy="4.500" r="2"/><circle class="g" cx="11" cy="9.500" r="1.500"/><circle class="g" cx="7.500" cy="14" r="1.500"/></svg>
        <svg><path class="k" d="M6 10H9V3.500H12M9 10H12M9 10V16.500H12"/><path class="b" d="M1 8H6.500V12H1ZM12 1.500H18.500V5.500H12ZM12 8H18.500V12H12ZM12 14.500H18.500V18H12Z"/></svg>
        <svg><path d="M1.500 3.500H18.500V14H9L5 18V14H1.500Z" fill="#fff" stroke="#1a6fb5" stroke-width="1.200"/></svg>
        <svg><path class="w" d="M5 1.500H13L17 5.500V17.500H5Z"/><path class="k" d="M12.500 2V6H17M9 9.500H14M9 12.500H14"/><path class="b" d="M2 6H5.500V9.500H2Z"/></svg>
        <svg><path class="w" d="M5 2.500H15V8Q14 12.500 10 12.500Q6 12.500 5 8Z"/><path class="k" d="M5 4H1.500Q2 9 6 9.500M15 4H18.500Q18 9 14 9.500M10 13V16M6 18.500V16H14V18.500Z"/></svg>

        <svg><path d="M3 1.500H12L17 6.500V18.500H3Z" fill="#e8e8e8" stroke="#444" stroke-width="1.300"/><path class="k" d="M12 2V6.500H17"/><path d="M6.500 16V12.500M9.500 16V14M13 16V9.500" stroke="#333" stroke-width="2"/></svg>
        <svg><path class="w" d="M2 4.500H19V16.500H1V12"/><text x="5" y="13" textLength="13" font-size="8" fill="#1b86d3">123</text><path class="fl" d="M3.500 0H8L6.500 3.500H8.500L1 11L3 6H.8Z"/></svg>
        <svg><path class="k" d="M11 1.500H17.500V7.500H11ZM1.500 12V17.500H8M6 10.500H9M12 10.500H18"/><path class="w" d="M10 11H19L16 14.500V19H13V14.500Z"/><path class="fl" d="M3.500 0H8L6.500 3.500H8.500L1 11L3 6H.8Z"/></svg>
        <svg><path class="b" d="M1.500 9L6 7L9 2H18.500V8L14 8L12 13L8 12L7 15L13 18.500H1.500Z"/><path d="M1.500 0H7V5L4.500 9L1.500 5Z" fill="#d9670f"/><circle cx="4.300" cy="3" r="1.200" fill="#fff"/><circle cx="16.500" cy="16.500" r="2.500" fill="#d9670f"/><circle cx="17.500" cy="10.500" r="1.500" fill="#d9670f"/></svg>
        <svg><path d="M10 1.500L18.500 10L10 18.500L1.500 10ZM5.700 5.700L14.300 14.300M14.300 5.700L5.700 14.300" fill="#fbf3fc" stroke="#8d3d9e" stroke-width="1.200"/></svg>
        <svg><path d="M2 2H12L19 10L12 18H2L9 10ZM6 2L13 10M5 14L10 18M4 16L11 10" fill="#eef6fd" stroke="#1c86e0" stroke-width="1.200"/></svg>
      </div>
      <div class="dots">···</div>
      <div class="wells">
        <label>Values</label><div class="well">Add data fields here</div>
        <strong>Drill through</strong>
        <div class="tog"><span>Cross-report</span><em><i></i>Off</em></div>
        <div class="tog t-on"><span>Keep all filters</span><em>On<i></i></em></div>
        <div class="well w2">Add drill-through fields here</div>
      </div>
    </section>
    <section class="data">
      <div class="p-head"><span>Data</span><svg width="14" height="14" viewBox="0 0 14 14"><path d="M1 1L6.500 7L1 13M7.500 1L13 7L7.500 13"/></svg></div>
      <div class="d-search"><svg width="15" height="15" viewBox="0 0 15 15"><circle cx="6" cy="6" r="5"/><path d="M9.700 9.700L14 14"/></svg><span>Search</span></div>
      <div class="d-body">
        <div class="fields">
          <div class="table"><svg class="exp" width="12" height="12"><use href="#chev"/></svg><svg class="ic" viewBox="0 0 14 14"><rect x="1.500" y="1.500" width="11" height="11" rx="1.500"/><path d="M1.500 5H12.500M1.500 9H12.500M5 1.500V12.500M9 1.500V12.500"/></svg><span>cleaned_data</span></div>
          <div class="f"><u></u><s></s><b></b>Arrest</div>
          <div class="f"><u></u><s></s><svg class="ic"><use href="#sigma"/></svg>Beat</div>
          <div class="f"><u></u><s></s><b></b>Block</div>
          <div class="f"><u><svg class="exp r" width="12" height="12"><use href="#chev"/></svg></u><s></s><svg class="ic"><use href="#cal"/></svg>CDate</div>
          <div class="f"><u><svg class="exp r" width="12" height="12"><use href="#chev"/></svg></u><s></s><svg class="ic"><use href="#cal"/></svg>Date</div>
          <div class="f"><u></u><s></s><svg class="ic"><use href="#fx"/></svg>DayOfWeek</div>
          <div class="f"><u></u><s></s><b></b>Description</div>
          <div class="f"><u></u><s></s><svg class="ic"><use href="#sigma"/></svg>District</div>
          <div class="f"><u></u><s></s><b></b>Domestic</div>
          <div class="f"><u></u><s></s><b></b>FBI Code</div>
          <div class="f"><u></u><s></s><svg class="ic"><use href="#sumcol"/></svg>Hour</div>
          <div class="f"><u></u><s></s><b></b>IUCR</div>
          <div class="f"><u></u><s></s><svg class="ic"><use href="#sigma"/></svg>Latitude</div>
          <div class="f"><u></u><s></s><b></b>Location Desc...</div>
          <div class="f"><u></u><s></s><svg class="ic"><use href="#sigma"/></svg>Longitude</div>
          <div class="f"><u></u><s></s><svg class="ic"><use href="#fx"/></svg>Month</div>
          <div class="f"><u></u><s></s><b></b>Primary Type</div>
          <div class="f"><u><svg class="exp r" width="12" height="12"><use href="#chev"/></svg></u><s></s><svg class="ic"><use href="#cal"/></svg>Time</div>
        </div>
        <div class="d-scroll"></div>
      </div>
    </section>
  </main>

  <footer class="status"><span>Page 2 of 3</span>
    <svg width="130" height="16" viewBox="0 0 130 16"><path d="M4 8.500H9M14 8.500H113M119 8.500H127M123 4.500V12.500M64 6V12" stroke="#444"/><path d="M46.500 3.500V13.500" stroke="#444" stroke-width="3"/></svg>
    <span class="pct">69%</span>
    <svg width="17" height="13" viewBox="0 0 17 13"><rect x=".7" y=".7" width="15" height="11" rx="1" stroke="#6fa070"/><path d="M3.500 5V3.500H6M10.500 3.500H13V5M3.500 8V9.500H6M10.500 9.500H13V8" stroke="#333"/></svg>
  </footer>

  <div class="taskbar">
    <div class="start"><svg width="18" height="18" viewBox="0 0 18 18"><path d="M0 2.500L8 1.500V8.500H0ZM9 1.400L18 0V8.500H9ZM0 9.500H8V16.500L0 15.500ZM9 9.500H18V18L9 16.600Z" fill="#fff"/></svg></div>
    <div class="tsearch"><svg width="22" height="22" viewBox="0 0 22 22"><circle cx="11" cy="11" r="8.800" fill="none" stroke="#111" stroke-width="2.400"/></svg><span>Type here to search</span><svg width="14" height="18" viewBox="0 0 14 18"><path d="M4.500 3Q7 -1 9.500 3V9Q7 13 4.500 9ZM1.500 7.500Q2 13.500 7 13.500T12.500 7.500M7 13.500V17M4 17H10" fill="none" stroke="#222" stroke-width="1.100"/></svg></div>
    <div class="tk"><svg width="18" height="16" viewBox="0 0 18 16"><path d="M1 0V2.500H12V0M1 16V13.500H12V16M1.500 5H11.500V11H1.500ZM15.500 0V16M14 7H17" fill="none" stroke="#fff" stroke-width="1.200"/></svg></div>
    <div class="tk a"><svg width="26" height="26" viewBox="0 0 26 26"><defs><linearGradient id="ed" x1="0" y1="0" x2="1" y2="1"><stop offset="0" stop-color="#35c1f1"/><stop offset="1" stop-color="#0c59a4"/></linearGradient></defs><circle cx="13" cy="13" r="12" fill="url(#ed)"/><path d="M3 7Q8 0 16 1Q25 4 25 13Q24 18 18 18Q13 17 15 13Q14 6 3 7Z" fill="#4cd07a"/><path d="M1 14Q3 7 11 8Q17 10 14 14Q12 19 19 20Q22 20 24 18Q20 26 11 25Q1 22 1 14Z" fill="#1478c8"/><path d="M9 12Q5 18 11 24Q20 26 24 18Q16 23 11 17Q9 15 9 12Z" fill="#114a8b"/></svg></div>
    <div class="tk b3"><svg width="22" height="22" viewBox="0 0 22 22"><path d="M1 2H9L11 4H21V20H1Z" fill="#f5b93b"/><path d="M1 6H21V20H1Z" fill="#fddf7e"/><path d="M4 21V13H18V21H14V17H8V21Z" fill="#2b9be0"/></svg></div>
    <div class="tk"><svg width="24" height="24" viewBox="0 0 24 24"><circle cx="12" cy="13" r="10.500" fill="#f9512e"/><path d="M15 0Q20 5 21 8Q25 17 16 22Q20 15 15 10Q12 6 15 0Z" fill="#ffc83a"/><path d="M3 5L5 8L8 6Q12 7 11 10Q5 14 10 18Q6 22 3 18Q0 12 3 5Z" fill="#ff9a24"/><circle cx="12.500" cy="13.500" r="4.500" fill="#7844c8"/><path d="M4 9Q10 7 14 11Q11 10 9 13L5 14Z" fill="#ff8a1c"/></svg></div>
    <div class="tk pbi"><svg width="20" height="26" viewBox="0 0 20 26"><rect x="12" y="1" width="8" height="24" rx="1" fill="#e6a014"/><rect x="6" y="7" width="8" height="18" rx="1" fill="#f3c11e"/><rect x="0" y="14" width="8" height="11" rx="1" fill="#fbdc54"/></svg></div>
    <div class="tray">
      <svg width="16" height="16" viewBox="0 0 16 16"><circle cx="10.500" cy="4" r="2.800"/><circle cx="4.500" cy="8.500" r="2.300"/><path d="M.7 15.500Q1 11 4.500 11Q8 11 8.500 15M8 9Q10 6.500 12.500 7.500Q15 8.500 15 12"/></svg>
      <svg class="ch" width="12" height="12"><use href="#chev"/></svg>
      <svg class="sp" width="18" height="16" viewBox="0 0 18 16"><path d="M1 5.500H4L8 2V14L4 10.500H1ZM10.500 5.500Q12.500 8 10.500 10.500M12.500 3.500Q16 8 12.500 12.500M14.500 1.500Q19 8 14.500 14.500"/></svg>
      <div class="lang">ENG<br>IN</div><div class="clock">5:12 PM<br>1/17/2025</div>
      <svg class="note" width="24" height="26" viewBox="0 0 24 26"><path d="M1 2H17V14H8L5 17V14H1Z" fill="#fff" stroke="none"/><path d="M4 5.500H14M4 8H14M4 10.500H11" stroke="#15141f"/><circle cx="16" cy="17" r="7.500" fill="#4a4953" stroke="#9c9ba3"/><text x="16" y="20.500" text-anchor="middle" font-size="10" font-weight="700" fill="#fff">4</text></svg>
    </div>
  </div>
</div>
</body>
</html>
```

FILE: styles.css
```css
* { box-sizing: border-box; }
body { margin: 0; font-family: "Open Sans", "Noto Sans", sans-serif; color: #252423; overflow: hidden; }
svg { fill: none; display: block; flex: none; overflow: visible; }
svg text { stroke: none; }
.defs { position: absolute; }
.app { width: 1366px; height: 768px; display: flex; flex-direction: column; }

.titlebar { height: 34px; background: #3b3a39; color: #fff; display: flex; align-items: center; flex: none; }
.titlebar svg { stroke: #fff; stroke-width: 1.200; }
.quick { display: flex; align-items: center; gap: 14px; padding-left: 17px; width: 102px; }
.quick .off { stroke: #777; }
.doc { width: 270px; font-size: 12px; letter-spacing: -.34px; white-space: nowrap; padding-top: 6px; }
.doc-caret { border: 4.500px solid transparent; border-top-color: #fff; border-bottom: 0; width: 9px; margin-top: 2px; }
.top-search { margin-left: 201px; width: 400px; height: 24px; background: #d5d4d2; border-radius: 2px; display: flex; align-items: center; gap: 10px; padding-left: 16px; font-size: 13px; letter-spacing: -.1px; color: #2a5a51; }
.titlebar .top-search svg { stroke: #333; }
.sign { margin-left: 171px; width: 46px; font-size: 12px; letter-spacing: -.2px; }
.win { display: flex; gap: 32px; padding-left: 31px; }

.menu { height: 32px; flex: none; display: flex; background: #fafafa; padding-left: 23px; font-size: 13.500px; line-height: 32px; letter-spacing: -.3px; }
.menu span { flex: none; }
.m1 { width: 58px; } .m2 { width: 70px; } .m3 { width: 66px; } .m4 { width: 90px; } .m5 { width: 61px; } .m6 { width: 88px; } .m7 { width: 60px; }
.m2 b { display: inline-block; height: 31px; border-bottom: 3px solid #117865; font-weight: 600; letter-spacing: -.3px; }
.menu .share { margin: 4px 0 0 760px; width: 83px; height: 24px; border-radius: 4px; background: #117865; color: #fff; display: flex; align-items: center; font-size: 12px; font-weight: 600; line-height: 24px; padding-left: 7px; letter-spacing: -.6px; }
.share svg { stroke: #fff; stroke-width: 1.200; }
.share span { width: 33px; margin-left: 8px; }
.share .c { stroke-width: 1.300; }

.ribbon { height: 94px; flex: none; display: flex; background: #fafafa; box-shadow: 0 1px 4px rgba(0,0,0,.28); position: relative; z-index: 2; padding-top: 4px; }
.group { height: 88px; border-right: 1px solid #d2d0ce; display: flex; flex-direction: column; flex: none; font-size: 12px; }
.tools { height: 76px; display: flex; padding-top: 6px; }
.g-clip { width: 161px; } .g-data { width: 370px; } .g-query { width: 117px; } .g-query .tools { padding-left: 9px; } .g-insert { width: 147px; } .g-calc { width: 188px; } .g-calc .tools { padding-left: 5px; } .g-sens { width: 74px; } .g-share { width: 59px; } .g-copilot { width: 60px; }
.glabel { font-size: 9.500px; height: 14px; line-height: 18px; text-align: center; color: #3b3a39; letter-spacing: -.05px; padding-top: 1px; }
.btn { display: flex; flex-direction: column; align-items: center; letter-spacing: -.42px; }
.btn > svg { stroke: #333; stroke-width: 1.200; margin-bottom: 2px; }
.btn span { line-height: 16px; white-space: nowrap; display: flex; align-items: center; justify-content: center; min-height: 16px; color: #3b3a39; }
.btn .tight { letter-spacing: -.7px; }
.btn.off span, .btn.off .c { color: #bdbbb9; stroke: #bdbbb9; }
.b-paste { width: 56px; }
.btn .c { width: 7px; height: 7px; stroke: #333; stroke-width: 1.600; margin: 2px 0 0 2px; }
.stack { color: #bdbbb9; letter-spacing: -.38px; margin: -6px 0 0 -4px; }
.stack div { display: flex; align-items: center; gap: 4px; height: 24px; white-space: nowrap; }
.collapse { margin: 76px 0 0 176px; stroke: #333; stroke-width: 1.800; transform: rotate(180deg); }

.work { height: 543px; flex: none; display: flex; background: #f3f2f1; }
.rail { width: 41px; border-right: 1px solid #d8d6d4; flex: none; }
.rail-i { height: 40px; width: 40px; display: grid; place-items: center; }
.rail-i.on { border-left: 3px solid #117865; padding-right: 2px; }
.rail-i svg { stroke: #605e5c; }
.rail-i text { fill: #605e5c; }
.center { width: 963px; flex: none; }
.upper { height: 508px; display: flex; background: #fff; }
.canvas { width: 931px; border-right: 1px solid #a19f9d; padding-left: 19px; flex: none; }
.page { width: 892px; height: 502px; border: 2px dotted #605e5c; border-top: 0; padding-left: 7px; }
.row { display: flex; }
.r1 { height: 267px; margin-bottom: 9px; }
.r2 { height: 211px; gap: 10px; }
.card { border: 1px solid #4f4d4b; box-shadow: 0 0 0 .5px #aaa; flex: none; background: #fff; }
.card h3 { margin: 0; height: 17px; background: #41a4ff; color: #fff; text-align: center; font: 700 11px/15px Roboto, sans-serif; letter-spacing: .25px; }
.c-map { width: 572px; margin-right: 11px; } .c-slicer { width: 129px; margin-right: 9px; } .c-loc { width: 154px; } .c-hot { width: 506px; } .c-freq { width: 359px; }
.legend { display: flex; height: 19px; align-items: center; padding-left: 3px; font-size: 9px; color: #605e5c; }
.legend b { width: 37px; font-weight: 700; font-size: 9px; letter-spacing: -.2px; }
.legend span { width: 17.600px; display: flex; align-items: center; gap: 2px; flex: none; }
.legend .w { width: 22.650px; }
.legend i { width: 7px; height: 7px; border-radius: 50%; }
.map { margin-left: 3px; overflow: hidden; }
.places { fill: #f4f4f0; font-size: 10px; stroke: none; }
.places text { paint-order: stroke; stroke: rgba(20,20,20,.55); stroke-width: 1.300; }
.places .big { font-size: 14px; }
.places .mid { font-size: 12px; }
.shields { font-size: 6px; font-weight: 700; text-anchor: middle; fill: #fff; }
.shields .dark { fill: #222; }
.s-head { display: flex; justify-content: space-between; align-items: center; height: 17px; padding: 0 8px 0 9px; font: 400 10px/14px Roboto, sans-serif; letter-spacing: .15px; }
.s-head .c, .s-drop .c { stroke: #777; stroke-width: .9; }
.s-body { display: flex; }
.s-body ul { margin: -1px 0 0; padding: 0 0 0 9px; list-style: none; width: 118px; }
.s-body li { height: 20.120px; display: flex; align-items: center; font-size: 12px; letter-spacing: -.45px; }
.s-body li::before { content: ""; width: 11px; height: 11px; background: #252423; margin-right: 5px; }
.s-scroll { width: 6px; height: 125px; background: #d4d4d4; }
.s-drop { margin: 2px 6px; height: 19px; border: 1px solid #e6e6e6; display: flex; align-items: center; justify-content: space-between; padding: 0 3px 0 4px; font-size: 9.500px; color: #605e5c; }
.grid { stroke: #c8c8c8; stroke-width: 1; stroke-dasharray: 1 3; }
.tick { fill: #777; font-size: 8px; letter-spacing: -.3px; }
.axis { fill: #252423; font: 400 9.500px Roboto, sans-serif; letter-spacing: .25px; }
.line { stroke: #118dff; stroke-width: 2.100; stroke-linejoin: round; }
.cat { fill: #777; font-size: 7.900px; letter-spacing: -.12px; }
.filters { width: 32px; display: flex; flex-direction: column; align-items: center; padding-top: 12px; flex: none; }
.filters svg { stroke: #333; stroke-width: 1.200; }
.filters .funnel { margin: 16px 0 0 4px; }
.filters span { writing-mode: vertical-rl; font-size: 14.500px; font-weight: 600; letter-spacing: 0; margin-top: 7px; line-height: 20px; }

.tabs { height: 35px; display: flex; background: #f3f2f1; }
.t-dev { width: 44px; display: flex; justify-content: center; padding-top: 4px; }
.t-dev svg { stroke: #444; stroke-width: 1.200; }
.t-dev.on { padding-top: 6px; flex-direction: column; align-items: center; width: 43px; }
.t-dev.on::after { content: ""; width: 24px; height: 3px; background: #117865; border-radius: 2px; margin-top: 6px; }
.arr { border: 4px solid transparent; width: 5px; height: 8px; margin-top: 14px; }
.arr.l { border-right: 5px solid #c2c0be; border-left: 0; margin-left: 7px; }
.arr.r { border-left: 5px solid #c2c0be; border-right: 0; margin: 14px 7px 0 17px; }
.tab { background: #fff; border-left: 1px solid #d2d0ce; font-size: 12px; line-height: 37px; text-align: center; letter-spacing: -.42px; }
.t1 { width: 105px; } .t2 { width: 88px; font-weight: 700; border-bottom: 4px solid #117865; letter-spacing: -.55px; } .t3 { width: 76px; }
.add { width: 39px; background: #117865; display: grid; place-items: center; }
.add svg { stroke: #fff; stroke-width: 2.200; }

.viz { width: 182px; border-right: 1px solid #d8d6d4; border-left: 1px solid #e1dfdd; flex: none; }
.p-head { height: 40px; display: flex; justify-content: space-between; align-items: center; padding: 0 7px 2px 8px; font-size: 15.500px; font-weight: 600; letter-spacing: -.3px; }
.p-head svg { stroke: #333; stroke-width: 1.200; }
.build { font-size: 12px; line-height: 12px; padding-left: 8px; -webkit-text-stroke: .2px #252423; letter-spacing: -.1px; height: 17px; }
.modes { display: flex; gap: 33px; padding-left: 8px; }
.mode { width: 32px; height: 32px; display: grid; place-items: center; border-radius: 3px; }
.mode.on { background: #d2d0ce; }
.mode:last-child svg { stroke: #333; stroke-width: 1.200; }
.notch { stroke: #8a8886; margin-top: 4px; }
.icons { display: grid; grid-template-columns: repeat(6, 28px); grid-auto-rows: 28px; padding: 5px 0 0 6px; place-items: center; height: 204px; }
.icons svg { width: 20px; height: 20px; }
.k { stroke: #3b3a39; stroke-width: 1.100; fill: none; }
.w { stroke: #3b3a39; stroke-width: 1; fill: #fff; }
.b { fill: #83beec; stroke: #1a6fb5; stroke-width: 1; }
.bl { stroke: #1a7fc5; stroke-width: 1.300; }
.g { fill: #c8c6c4; stroke: #797775; stroke-width: 1; }
.o { fill: #f0963a; stroke: #d9670f; }
.fl { fill: #fbc85b; stroke: #d9670f; stroke-width: 1; }
.dots { height: 28px; line-height: 19px; font-size: 18px; font-weight: 400; padding-left: 11px; letter-spacing: 1.400px; }
.wells { border-top: 1px solid #d8d6d4; padding: 7px 6px 0 4px; font-size: 12px; letter-spacing: -.28px; margin-top: 1px; }
.wells label, .wells strong { display: block; padding-left: 8px; height: 23px; line-height: 21px; }
.wells strong { font-weight: 400; -webkit-text-stroke: .25px #3b3a39; margin-top: 9px; height: 21px; line-height: 22px; color: #3b3a39; letter-spacing: -.08px; }
.well { height: 28px; border: 1px dashed #bbb9b7; background: #fff; line-height: 27px; padding-left: 10px; }
.w2 { height: 26px; line-height: 25px; padding-left: 8px; margin-top: 5px; white-space: nowrap; letter-spacing: -.25px; }
.tog { display: flex; height: 27px; align-items: center; justify-content: space-between; padding: 0 16px 0 8px; }
.tog em { width: 32px; height: 16px; border-radius: 8px; border: 1px solid #777; background: #fff; font-style: normal; font-size: 10px; color: #605e5c; display: flex; align-items: center; gap: 2px; padding-left: 4px; }
.tog i { width: 8px; height: 8px; border-radius: 50%; background: #605e5c; }
.tog.t-on em { background: #117865; border-color: #117865; color: #fff; gap: 1px; }
.tog.t-on i { background: #fff; }

.data { width: 180px; flex: none; }
.d-search { margin: 5px 4px 8px; height: 24px; border: 1px solid #c8c6c4; border-bottom-color: #605e5c; border-radius: 3px; background: #fff; display: flex; align-items: center; gap: 7px; padding-left: 12px; font-size: 12.500px; color: #605e5c; letter-spacing: 0; }
.d-search svg { stroke: #555; }
.d-body { display: flex; }
.fields { width: 168px; font-size: 12px; letter-spacing: -.32px; color: #3b3a39; padding-top: 1px; white-space: nowrap; }
.table, .f { display: flex; align-items: center; height: 24px; }
.table { padding-left: 13px; }
.table .ic { margin: 0 5px 0 3px; }
.ic { width: 14px; height: 14px; stroke: #252423; stroke-width: 1.100; }
.exp { stroke: #777; stroke-width: .9; }
.exp.r { transform: rotate(-90deg); }
.f u { width: 44px; padding-left: 28px; }
.f s { width: 12px; height: 12px; border: 1px solid #777; border-radius: 1.500px; margin-right: 7px; flex: none; }
.f b { width: 14px; }
.f .ic, .f b { margin-right: 5px; flex: none; }
.d-scroll { width: 8px; height: 396px; background: #c8c8c8; }

.status { height: 25px; flex: none; background: #f3f2f1; border-top: 1px solid #d8d6d4; display: flex; align-items: center; font-size: 12px; letter-spacing: -.25px; padding-left: 4px; color: #3b3a39; }
.status > span:first-child { width: 1146px; }
.pct { width: 44px; padding-left: 10px; letter-spacing: -.5px; }
.status .pct + svg { margin-left: 8px; }

.taskbar { height: 40px; flex: none; background: #0c0b15; display: flex; color: #fff; }
.start { width: 48px; display: grid; place-items: center; }
.tsearch { width: 344px; background: #f2f2f2; color: #333; display: flex; align-items: center; padding-left: 8px; font-size: 14px; }
.tsearch span { width: 277px; margin-left: 10px; letter-spacing: -.35px; }
.tk { width: 49px; display: grid; place-items: center; }
.tk.a { width: 52px; }
.tk.b3 { width: 49px; margin-left: -1px; }
.tk.pbi { width: 48px; background: #3b3a44; border-bottom: 2px solid #76b9ed; }
.tray { margin-left: auto; display: flex; align-items: center; width: 233px; font-size: 12px; line-height: 17px; letter-spacing: -.5px; text-align: center; }
.tray svg { stroke: #fff; stroke-width: 1.100; }
.tray .ch { transform: rotate(180deg); margin: 0 9px 0 22px; stroke-width: 1.300; }
.lang { width: 34px; margin-left: 4px; }
.clock { width: 66px; }
.tray .note { margin: 5px 0 0 10px; }
```
